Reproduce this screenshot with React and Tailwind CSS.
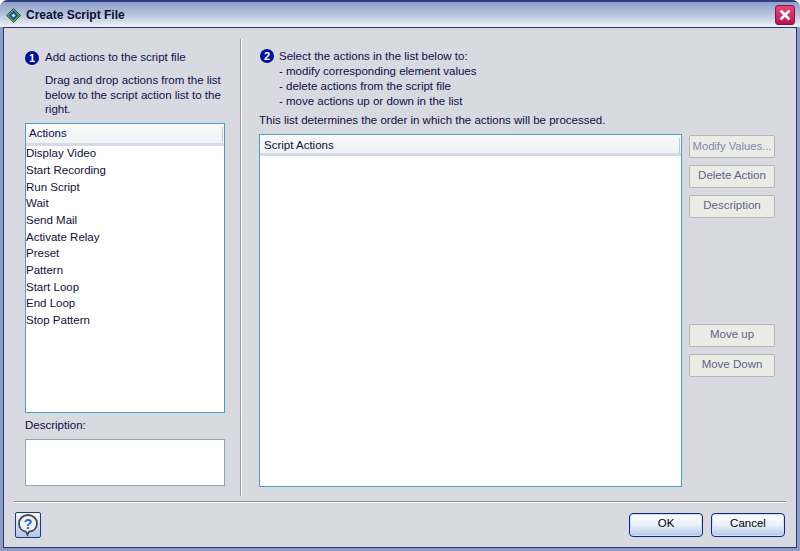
import React from "react";

const actions = [
  "Display Video",
  "Start Recording",
  "Run Script",
  "Wait",
  "Send Mail",
  "Activate Relay",
  "Preset",
  "Pattern",
  "Start Loop",
  "End Loop",
  "Stop Pattern",
];

const StepBadge = ({ n }) => (
  <span className="flex h-[14px] w-[14px] shrink-0 items-center justify-center rounded-full bg-[#00109c] text-[11px] font-bold leading-none text-white">
    {n}
  </span>
);

const SideButton = ({ children, className = "" }) => (
  <button
    className={`h-[23px] w-[86px] whitespace-nowrap rounded-[2px] border border-[#b5b7b3] bg-[#ecece6] pb-[1px] text-center ${className}`}
  >
    {children}
  </button>
);

const ListHeader = ({ children, className = "" }) => (
  <div
    className={`flex items-center justify-between border-b-[3px] border-[#d5dbe9] bg-gradient-to-b from-[#fbfbf9] to-[#eff1f4] ${className}`}
  >
    <span>{children}</span>
    <span className="mr-[1px] h-[15px] w-[1px] bg-[#c5c9d0]" />
  </div>
);

const DialogButton = ({ children }) => (
  <button className="h-[24px] w-[74px] rounded-[4px] border border-[#0c2a78] bg-gradient-to-b from-[#fdfdff] via-[#eaf0fa] to-[#b4c8ea] pb-[2px] text-center text-black shadow-[inset_0_0_0_1px_#cfe0f6]">
    {children}
  </button>
);

const App = () => {
  return (
    <div className="flex h-[551px] w-[800px] flex-col overflow-hidden rounded-t-[8px] bg-[#8c9cc4] font-['Liberation_Sans',Arial,sans-serif] text-[11.5px] text-[#10104a]">
      {/* Title bar */}
      <div className="flex h-[27px] shrink-0 items-center justify-between border-t-2 border-[#2b3f7e] bg-gradient-to-b from-[#8e9fc9] via-[#b7c3dc] to-[#f0f2f7] pl-[6px] pr-[5px] pt-[1px]">
        <div className="flex items-center gap-[5px]">
          <svg width="15" height="15" viewBox="0 0 15 15">
            <path d="M7.5 0.5 14.5 7.5 7.5 14.5 0.5 7.5Z" fill="#5cb82c" stroke="#1c3a14" strokeWidth="0.8" />
            <path d="M7.5 2.5 12.5 7.5 7.5 12.5 2.5 7.5Z" fill="#1d4fa8" />
            <path d="M7.5 5.5 9.500 7.5 7.5 9.500 5.500 7.5Z" fill="#cfe2f6" />
          </svg>
          <span className="text-[12px] font-bold text-[#0c1030]">Create Script File</span>
        </div>
        <button className="flex h-[20px] w-[20px] items-center justify-center rounded-[3px] border border-[#8c1540] bg-gradient-to-b from-[#e8447a] to-[#c00c50]">
          <svg width="14" height="14" viewBox="0 0 14 14">
            <path d="M2.5 2.5 11.5 11.5M11.5 2.5 2.5 11.5" stroke="#fff" strokeWidth="2.6" />
          </svg>
        </button>
      </div>

      {/* Dialog body */}
      <div className="mx-[3px] mb-[3px] flex flex-1 flex-col border border-[#23386f] bg-[#d8d9e1]">
        <div className="flex h-[469px] pt-[11px]">
          {/* Left column */}
          <div className="ml-[21px] flex w-[200px] flex-col pt-[12px]">
            <div className="flex h-[14px] items-center gap-[6px]">
              <StepBadge n="1" />
              <span>Add actions to the script file</span>
            </div>
            <p className="ml-[20px] mt-[8px] leading-[14.5px]">
              Drag and drop actions from the list below to the script action list to the right.
            </p>
            <div className="mt-[6px] h-[290px] border border-[#4aa3b8] bg-white">
              <ListHeader className="h-[22px] pl-[3px] pt-[2px]">Actions</ListHeader>
              <ul>
                {actions.map((action) => (
                  <li key={action} className="flex h-[16.7px] items-center text-[#10103a]">
                    {action}
                  </li>
                ))}
              </ul>
            </div>
            <div className="mt-[4px] text-[#10103a]">Description:</div>
            <div className="mt-[5px] h-[47px] border border-[#8fa8b0] bg-white" />
          </div>

          {/* Divider */}
          <div className="ml-[15px] h-[457px] w-[2px] border-l border-[#9a9ca6] bg-white" />

          {/* Right column */}
          <div className="ml-[17px] flex flex-1 flex-col pt-[10px]">
            <div className="flex items-start gap-[5px] pl-[1px]">
              <StepBadge n="2" />
              <div className="leading-[15px]">
                <div>Select the actions in the list below to:</div>
                <div>- modify corresponding element values</div>
                <div>- delete actions from the script file</div>
                <div>- move actions up or down in the list</div>
              </div>
            </div>
            <div className="mt-[4px] leading-[15px] text-[#10103a]">
              This list determines the order in which the actions will be processed.
            </div>
            <div className="mt-[6px] flex">
              <div className="h-[353px] w-[423px] border border-[#4aa3b8] bg-white">
                <ListHeader className="h-[21px] pl-[4px] pt-[3px] text-[#10103a]">Script Actions</ListHeader>
              </div>
              <div className="ml-[7px] flex flex-col pt-[1px]">
                <SideButton className="text-[11.2px] text-[#7a86b4]">Modify Values...</SideButton>
                <SideButton className="mt-[7px] text-[#5c6390]">Delete Action</SideButton>
                <SideButton className="mt-[7px] text-[#5c6390]">Description</SideButton>
                <SideButton className="mt-[106px] text-[#5c6390]">Move up</SideButton>
                <SideButton className="mt-[7px] text-[#5c6390]">Move Down</SideButton>
              </div>
            </div>
          </div>
        </div>

        {/* Footer */}
        <div className="ml-[10px] mr-[10px] mt-[4px] h-[2px] border-t border-[#8e9098] bg-white" />
        <div className="flex items-start justify-between pl-[11px] pr-[11px] pt-[9px]">
          <button className="flex h-[26px] w-[26px] items-center justify-center rounded-[2px] border border-[#1c3a80] bg-gradient-to-b from-[#f4f6fc] to-[#b4c6ea]">
            <svg width="22" height="24" viewBox="0 0 22 24">
              <path
                d="M11 2C5.800 2 2 5.800 2 10.500c0 4.400 3 7.600 7 8.200l1.500 3 1.600-3c4.500-.6 7.900-3.800 7.900-8.200C20 5.800 16.200 2 11 2Z"
                fill="#eef1f8"
                stroke="#4a4a4a"
                strokeWidth="1.8"
              />
              <text x="11" y="15.500" textAnchor="middle" fontSize="14" fontWeight="bold" fill="#1a66e0" fontFamily="Liberation Sans">
                ?
              </text>
            </svg>
          </button>
          <div className="mt-[1px] flex gap-[8px]">
            <DialogButton>OK</DialogButton>
            <DialogButton>Cancel</DialogButton>
          </div>
        </div>
      </div>
    </div>
  );
};

export default App;
